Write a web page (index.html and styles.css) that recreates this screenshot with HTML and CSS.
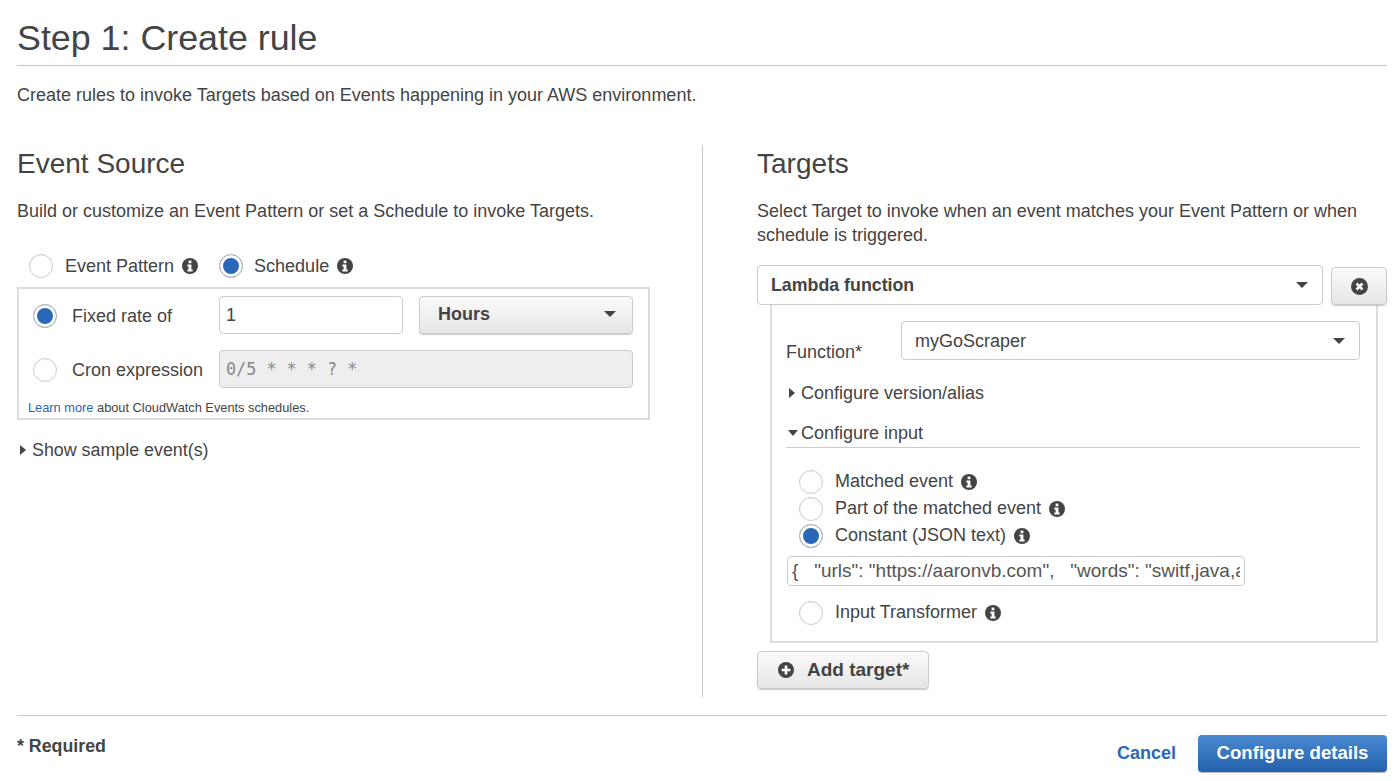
FILE: index.html

```html
<!DOCTYPE html>
<html lang="en">
<head>
    <meta charset="UTF-8">
    <title>Step 1: Create rule</title>
    <link rel="stylesheet" href="styles.css">
</head>
<body>

<svg class="defs" width="0" height="0">
    <symbol id="info" viewBox="0 0 16 16">
        <circle cx="8" cy="8" r="8" fill="#444"/>
        <rect x="6.6" y="2.6" width="2.8" height="2.6" fill="#fff"/>
        <path d="M5.4 6.5h4v5h1.2v1.9H5.4v-1.9h1.2V8.4H5.4z" fill="#fff"/>
    </symbol>
</svg>

<h1>Step 1: Create rule</h1>
<p class="intro">Create rules to invoke Targets based on Events happening in your AWS environment.</p>

<div class="columns">
    <div class="col-left">
        <h2>Event Source</h2>
        <p class="lead">Build or customize an Event Pattern or set a Schedule to invoke Targets.</p>

        <div class="source-tabs">
            <span class="radio"></span>
            <span class="tab-label">Event Pattern</span>
            <svg class="info"><use href="#info"/></svg>
            <span class="radio on tab-second"></span>
            <span class="tab-label">Schedule</span>
            <svg class="info"><use href="#info"/></svg>
        </div>

        <div class="schedule">
            <div class="sched-row">
                <span class="radio on"></span>
                <span class="sched-label">Fixed rate of</span>
                <input class="rate" value="1">
                <div class="btn-select">Hours<span class="caret"></span></div>
            </div>
            <div class="sched-row cron-row">
                <span class="radio"></span>
                <span class="sched-label">Cron expression</span>
                <input class="cron" placeholder="0/5 * * * ? *" disabled>
            </div>
            <div class="sched-note"><a href="#">Learn more</a> about CloudWatch Events schedules.</div>
        </div>

        <div class="expander sample"><span class="tri-right"></span>Show sample event(s)</div>
    </div>

    <div class="col-right">
        <h2>Targets</h2>
        <p class="lead targets-lead">Select Target to invoke when an event matches your Event Pattern or when schedule is triggered.</p>

        <div class="target-head">
            <div class="target-select">Lambda function<span class="caret"></span></div>
            <div class="remove">
                <svg width="17" height="17" viewBox="0 0 16 16">
                    <circle cx="8" cy="8" r="8" fill="#444"/>
                    <path d="M5.2 5.2l5.6 5.6M10.8 5.2l-5.6 5.6" stroke="#fff" stroke-width="2.4"/>
                </svg>
            </div>
        </div>

        <div class="target-panel">
            <div class="function-row">
                <span class="function-label">Function*</span>
                <div class="function-select">myGoScraper<span class="caret"></span></div>
            </div>
            <div class="expander version"><span class="tri-right"></span>Configure version/alias</div>
            <div class="expander input-head"><span class="tri-down"></span>Configure input</div>

            <div class="input-opt">
                <span class="radio"></span>Matched event
                <svg class="info"><use href="#info"/></svg>
            </div>
            <div class="input-opt">
                <span class="radio"></span>Part of the matched event
                <svg class="info"><use href="#info"/></svg>
            </div>
            <div class="input-opt">
                <span class="radio on"></span>Constant (JSON text)
                <svg class="info"><use href="#info"/></svg>
            </div>
            <input class="json" value='{   "urls": "https://aaronvb.com",   "words": "switf,java,aws,golang" }'>
            <div class="input-opt">
                <span class="radio"></span>Input Transformer
                <svg class="info"><use href="#info"/></svg>
            </div>
        </div>

        <div class="add-target">
            <svg width="16" height="16" viewBox="0 0 16 16">
                <circle cx="8" cy="8" r="8" fill="#444"/>
                <path d="M8 3.6v8.8M3.6 8h8.8" stroke="#fff" stroke-width="2.6"/>
            </svg>
            Add target*
        </div>
    </div>
</div>

<div class="footer">
    <span class="required">* Required</span>
    <div class="actions">
        <a class="cancel" href="#">Cancel</a>
        <div class="primary">Configure details</div>
    </div>
</div>

</body>
</html>
```

FILE: styles.css

```css
* {
    box-sizing: border-box;
}
body {
    font-family: "Liberation Sans", Arial, sans-serif;
    font-size: 18px;
    color: #444;
    background: #fff;
    margin: 0;
    padding: 0 13px 0 17px;
    height: 781px;
    overflow: hidden;
}
.defs {
    position: absolute;
}
h1 {
    font-size: 35.8px;
    font-weight: normal;
    line-height: 40px;
    margin: 0;
    padding: 18px 0 7px;
    height: 66px;
    border-bottom: 1px solid #c8c8c8;
}
.intro {
    margin: 0;
    padding-top: 18px;
    line-height: 22px;
    height: 79px;
}
h2 {
    font-size: 28px;
    font-weight: normal;
    line-height: 36px;
    margin: 0;
    padding-top: 1px;
    height: 37px;
}
.lead {
    margin: 17px 0 0;
    line-height: 24px;
}
.columns {
    display: flex;
    height: 552px;
}
.col-left {
    width: 686px;
    border-right: 1px solid #c8c8c8;
}
.col-right {
    flex: 1;
    padding-left: 54px;
}

/* radios */
.radio {
    display: inline-block;
    flex: none;
    width: 24px;
    height: 24px;
    border: 1px solid #ccc;
    border-radius: 50%;
    background: #fff;
    box-shadow: inset 0 1px 1px rgba(0,0,0,0.05);
}
.radio.on {
    background: #2a67b7;
    border: 1px solid #bbb;
    box-shadow: inset 0 0 0 3px #fff;
}
.info {
    flex: none;
    width: 16px;
    height: 16px;
}

/* event source */
.source-tabs {
    display: flex;
    align-items: center;
    height: 24px;
    margin: 31px 0 0 12px;
}
.tab-label {
    margin: 0 8px 0 12px;
}
.tab-second {
    margin-left: 21px;
}
.tab-second + .tab-label {
    margin-left: 11px;
}
.schedule {
    width: 633px;
    height: 133px;
    margin-top: 9px;
    border: 2px solid #ddd;
    padding: 7px 15px 0 14px;
}
.sched-row {
    display: flex;
    align-items: center;
    height: 38px;
}
.sched-row .radio,
.sched-label {
    margin-top: 2px;
}
.cron-row {
    margin-top: 16px;
}
.sched-label {
    width: 147px;
    margin-left: 15px;
    white-space: nowrap;
}
.rate,
.cron {
    height: 38px;
    border: 1px solid #ccc;
    border-radius: 4px;
    font: 18px "Liberation Sans", Arial, sans-serif;
    color: #444;
    padding: 0 6px;
}
.rate {
    width: 184px;
    margin-right: 16px;
}
.cron {
    width: 414px;
    background: #eee;
    font: 16.8px "DejaVu Sans Mono", monospace;
}
.cron::placeholder {
    color: #888;
    opacity: 1;
}
.btn-select {
    width: 214px;
    height: 38px;
    display: flex;
    align-items: center;
    justify-content: space-between;
    padding: 0 16px 2px 18px;
    font-weight: bold;
    border: 1px solid #ccc;
    border-radius: 4px;
    background: linear-gradient(#fafafa, #e6e6e6);
    box-shadow: 0 1px 1px rgba(0,0,0,0.2);
}
.caret {
    width: 0;
    height: 0;
    border-left: 6px solid transparent;
    border-right: 6px solid transparent;
    border-top: 6px solid #444;
}
.sched-note {
    font-size: 12.8px;
    line-height: 16px;
    margin: 12px 0 0 -5px;
    white-space: nowrap;
}
.sched-note a {
    color: #2a67b7;
    text-decoration: none;
}
.expander {
    display: flex;
    align-items: center;
    line-height: 24px;
}
.sample {
    margin: 18px 0 0 3px;
    font-size: 17.85px;
}
.tri-right {
    width: 0;
    height: 0;
    margin-right: 6px;
    border-top: 5px solid transparent;
    border-bottom: 5px solid transparent;
    border-left: 6px solid #444;
}
.tri-down {
    width: 0;
    height: 0;
    margin-right: 3px;
    border-left: 5px solid transparent;
    border-right: 5px solid transparent;
    border-top: 6px solid #444;
}

/* targets */
.target-head {
    display: flex;
    align-items: flex-end;
    justify-content: space-between;
    margin-top: 18px;
    height: 40px;
}
.target-select {
    width: 566px;
    height: 40px;
    display: flex;
    align-items: center;
    justify-content: space-between;
    padding: 0 14px 0 13px;
    font-size: 17.8px;
    font-weight: bold;
    border: 1px solid #ccc;
    border-radius: 4px;
}
.remove {
    width: 56px;
    height: 38px;
    display: flex;
    align-items: center;
    justify-content: center;
    border: 1px solid #ccc;
    border-radius: 4px;
    background: linear-gradient(#fafafa, #e6e6e6);
    box-shadow: 0 1px 1px rgba(0,0,0,0.2);
}
.target-panel {
    width: 608px;
    height: 338px;
    margin-left: 13px;
    border: 2px solid #ddd;
    border-top: 0;
    padding: 16px 16px 0 14px;
}
.function-row {
    display: flex;
    height: 39px;
}
.function-label {
    width: 115px;
    padding-top: 20px;
    line-height: 22px;
}
.function-select {
    flex: 1;
    display: flex;
    align-items: center;
    justify-content: space-between;
    padding: 1px 14px 0 13px;
    border: 1px solid #ccc;
    border-radius: 4px;
}
.version {
    margin-top: 21px;
    padding-left: 3px;
}
.input-head {
    margin-top: 16px;
    padding: 0 0 3px 2px;
    border-bottom: 1px solid #ccc;
    height: 27px;
}
.input-opt {
    display: flex;
    align-items: center;
    gap: 8px;
    height: 27px;
    padding-left: 13px;
}
.input-opt .radio {
    margin-right: 4px;
}
.input-head + .input-opt {
    margin-top: 20px;
}
.json {
    display: block;
    width: 458px;
    height: 30px;
    margin: 7px 0 13px 1px;
    padding: 0 4px;
    border: 1px solid #ccc;
    border-radius: 4px;
    font: 19px "Liberation Sans", Arial, sans-serif;
    color: #555;
}
.add-target {
    display: flex;
    align-items: center;
    gap: 13px;
    width: 172px;
    height: 38px;
    margin-top: 8px;
    padding-left: 20px;
    font-size: 19px;
    font-weight: bold;
    border: 1px solid #ccc;
    border-radius: 4px;
    background: linear-gradient(#fafafa, #e6e6e6);
    box-shadow: 0 1px 1px rgba(0,0,0,0.2);
}

/* footer */
.footer {
    display: flex;
    justify-content: space-between;
    margin-top: 18px;
    padding-top: 19px;
    border-top: 1px solid #c8c8c8;
}
.required {
    font-size: 17.8px;
    font-weight: bold;
    line-height: 22px;
}
.actions {
    display: flex;
    align-items: center;
    gap: 22px;
}
.cancel {
    color: #2a67b7;
    font-weight: bold;
    text-decoration: none;
}
.primary {
    width: 189px;
    height: 37px;
    line-height: 36px;
    text-align: center;
    color: #fff;
    font-size: 18.6px;
    font-weight: bold;
    border-radius: 4px;
    background: linear-gradient(#4a8ad0, #2361ad);
    box-shadow: 0 1px 1px rgba(0,0,0,0.3);
}
```
